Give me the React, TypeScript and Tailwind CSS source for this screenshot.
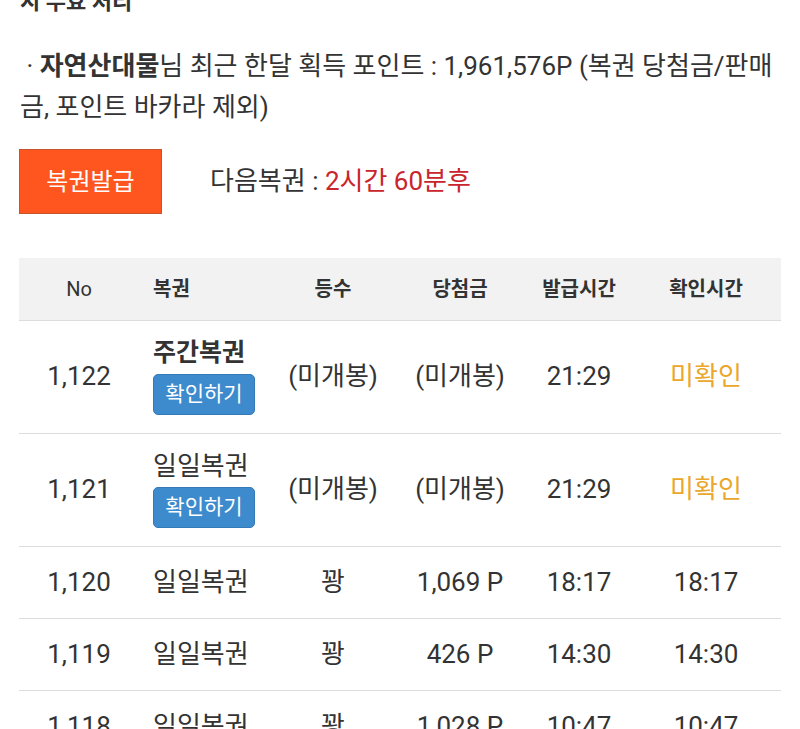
import React from 'react';

type Row = {
  no: string;
  name: string;
  weekly?: boolean;
  unopened?: boolean;
  rank: string;
  prize: string;
  issued: string;
  checked: string;
};

const rows: Row[] = [
  { no: '1,122', name: '주간복권', weekly: true, unopened: true, rank: '(미개봉)', prize: '(미개봉)', issued: '21:29', checked: '미확인' },
  { no: '1,121', name: '일일복권', unopened: true, rank: '(미개봉)', prize: '(미개봉)', issued: '21:29', checked: '미확인' },
  { no: '1,120', name: '일일복권', rank: '꽝', prize: '1,069 P', issued: '18:17', checked: '18:17' },
  { no: '1,119', name: '일일복권', rank: '꽝', prize: '426 P', issued: '14:30', checked: '14:30' },
  { no: '1,118', name: '일일복권', rank: '꽝', prize: '1,028 P', issued: '10:47', checked: '10:47' },
];

const headers = ['No', '복권', '등수', '당첨금', '발급시간', '확인시간'];

export default function App() {
  return (
    <div
      className="h-[729px] overflow-hidden bg-white text-[#333]"
      style={{ fontFamily: 'Roboto, "Noto Sans CJK KR", sans-serif' }}
    >
      <div className="-mt-[14px] px-[20px] text-[22px] font-bold leading-[32px]">시 무효 처리</div>

      <p className="mt-[28px] px-[20px] text-[26px] leading-[41px]">
        &nbsp;· <b className="font-bold">자연산대물</b>님 최근 한달 획득 포인트 : 1,961,576P (복권 당첨금/판매금, 포인트 바카라 제외)
      </p>

      <div className="mt-[21px] flex items-center px-[19px]">
        <button className="h-[65px] w-[143px] border border-[#c8542c] bg-[#ff5620] text-[24px] text-white">
          복권발급
        </button>
        <div className="ml-[48px] text-[26px]">
          다음복권 : <span className="text-[#c9252c]">2시간 60분후</span>
        </div>
      </div>

      <div className="mt-[44px] px-[19px]">
        <table className="w-full table-fixed border-collapse">
          <colgroup>
            <col className="w-[120px]" />
            <col className="w-[134px]" />
            <col className="w-[120px]" />
            <col className="w-[134px]" />
            <col className="w-[104px]" />
            <col className="w-[150px]" />
          </colgroup>
          <thead>
            <tr className="h-[62px] border-b border-[#dcdcdc] bg-[#f2f2f2] text-[20px]">
              {headers.map((h, i) => (
                <th
                  key={h}
                  className={
                    i === 0
                      ? 'text-center font-normal'
                      : i === 1
                        ? 'pl-[14px] text-left font-bold'
                        : 'text-center font-bold'
                  }
                >
                  {h}
                </th>
              ))}
            </tr>
          </thead>
          <tbody className="text-[26px]">
            {rows.map((r) => (
              <tr
                key={r.no}
                className={r.unopened ? 'h-[113px] border-b border-[#dcdcdc]' : 'h-[72px] border-b border-[#dcdcdc]'}
              >
                <td className="text-center">{r.no}</td>
                <td className="pl-[14px]">
                  <div className={r.weekly ? 'text-[25px] font-bold leading-[30px]' : 'leading-[30px]'}>
                    {r.name}
                  </div>
                  {r.unopened && (
                    <button className="mt-[6px] h-[41px] w-[102px] rounded-[5px] border border-[#3479b8] bg-[#3d8bcd] text-[21px] text-white">
                      확인하기
                    </button>
                  )}
                </td>
                <td className="text-center">{r.rank}</td>
                <td className="text-center">{r.prize}</td>
                <td className="text-center">{r.issued}</td>
                <td className={r.unopened ? 'text-center text-[#eaa72b]' : 'text-center'}>{r.checked}</td>
              </tr>
            ))}
          </tbody>
        </table>
      </div>
    </div>
  );
}
